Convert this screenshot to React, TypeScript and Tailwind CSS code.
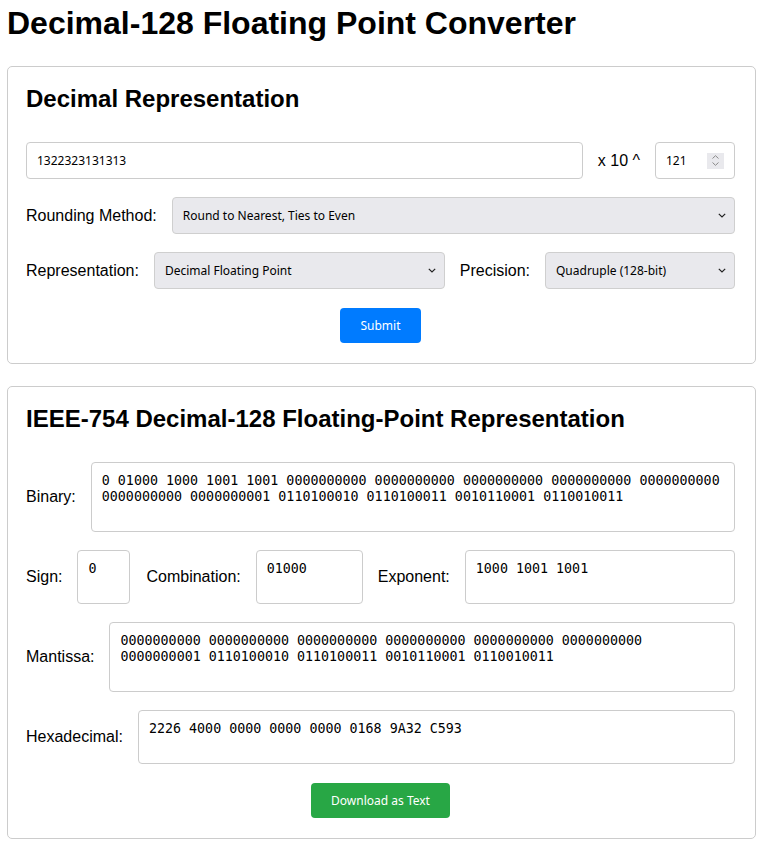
import React from "react";

const sans = { fontFamily: '"Liberation Sans", Arial, sans-serif' };

function Chevron() {
  return (
    <svg width="8" height="5" viewBox="0 0 8 5" className="shrink-0">
      <path d="M0.8 0.8 L4 4 L7.2 0.8" fill="none" stroke="#222" strokeWidth="1.2" />
    </svg>
  );
}

function Select({ value, className = "" }: { value: string; className?: string }) {
  return (
    <div
      className={`h-[37px] flex items-center justify-between pl-[10px] pr-[8px] bg-[#e9e9ed] border border-[#cfcfcf] rounded-[4px] text-[12px] text-black font-['Noto_Sans',sans-serif] ${className}`}
    >
      <span>{value}</span>
      <Chevron />
    </div>
  );
}

function Box({ text, h, className = "" }: { text: string; h: string; className?: string }) {
  return (
    <div
      className={`${h} border border-[#cccccc] rounded-[4px] bg-white p-[10px] text-[13.33px] leading-[16px] text-black whitespace-pre font-['DejaVu_Sans_Mono',monospace] overflow-hidden ${className}`}
    >
      {text}
    </div>
  );
}

function Label({ children }: { children: React.ReactNode }) {
  return <span className="text-[16px] text-black shrink-0 whitespace-nowrap">{children}</span>;
}

export default function App() {
  return (
    <div style={sans} className="bg-white min-h-[850px] pl-[7px] pr-[5px] pt-[5px] text-black">
      <h1 className="text-[32px] leading-[37px] font-bold mb-[24px]">Decimal-128 Floating Point Converter</h1>

      <div className="border border-[#cccccc] rounded-[5px] pl-[18px] pr-[20px] pt-[18px] pb-[20px]">
        <h2 className="text-[24px] leading-[28px] font-bold mb-[29px]">Decimal Representation</h2>

        <div className="flex items-center gap-[15px]">
          <div className="flex-1 h-[37px] border border-[#cccccc] rounded-[4px] bg-white px-[10px] flex items-center text-[12px] font-['Noto_Sans',sans-serif]">
            1322323131313
          </div>
          <Label>x 10 ^</Label>
          <div className="w-[80px] h-[37px] border border-[#cccccc] rounded-[4px] bg-white pl-[10px] pr-[10px] flex items-center justify-between text-[12px] font-['Noto_Sans',sans-serif]">
            <span>121</span>
            <div className="w-[17px] h-[16px] bg-[#e9e9ed] flex flex-col items-center justify-center gap-[3px]">
              <svg width="7" height="4" viewBox="0 0 7 4">
                <path d="M0.5 3.5 L3.5 0.7 L6.5 3.5" fill="none" stroke="#8a8a8a" strokeWidth="1" />
              </svg>
              <svg width="7" height="4" viewBox="0 0 7 4">
                <path d="M0.5 0.5 L3.5 3.3 L6.5 0.5" fill="none" stroke="#8a8a8a" strokeWidth="1" />
              </svg>
            </div>
          </div>
        </div>

        <div className="flex items-center gap-[15px] mt-[18px]">
          <Label>Rounding Method:</Label>
          <Select value="Round to Nearest, Ties to Even" className="flex-1" />
        </div>

        <div className="flex items-center gap-[15px] mt-[18px]">
          <Label>Representation:</Label>
          <Select value="Decimal Floating Point" className="flex-1" />
          <Label>Precision:</Label>
          <Select value="Quadruple (128-bit)" className="w-[190px]" />
        </div>

        <div className="flex justify-center mt-[19px]">
          <button className="h-[35px] px-[20px] rounded-[4px] bg-[#007bff] text-white text-[12px] font-['Noto_Sans',sans-serif]">
            Submit
          </button>
        </div>
      </div>

      <div className="border border-[#cccccc] rounded-[5px] pl-[18px] pr-[20px] pt-[18px] pb-[20px] mt-[22px]">
        <h2 className="text-[24px] leading-[28px] font-bold mb-[29px]">IEEE-754 Decimal-128 Floating-Point Representation</h2>

        <div className="flex items-center gap-[15px]">
          <Label>Binary:</Label>
          <Box
            h="h-[70px]"
            className="flex-1"
            text={"0 01000 1000 1001 1001 0000000000 0000000000 0000000000 0000000000 0000000000\n0000000000 0000000001 0110100010 0110100011 0010110001 0110010011"}
          />
        </div>

        <div className="flex items-center gap-[15px] mt-[18px]">
          <Label>Sign:</Label>
          <Box h="h-[54px]" className="w-[53px]" text="0" />
          <span className="ml-[1px]"><Label>Combination:</Label></span>
          <Box h="h-[54px]" className="w-[107px]" text="01000" />
          <Label>Exponent:</Label>
          <Box h="h-[54px]" className="flex-1" text="1000 1001 1001" />
        </div>

        <div className="flex items-center gap-[15px] mt-[18px]">
          <Label>Mantissa:</Label>
          <Box
            h="h-[70px]"
            className="flex-1"
            text={"0000000000 0000000000 0000000000 0000000000 0000000000 0000000000\n0000000001 0110100010 0110100011 0010110001 0110010011"}
          />
        </div>

        <div className="flex items-center gap-[15px] mt-[18px]">
          <Label>Hexadecimal:</Label>
          <Box h="h-[54px]" className="flex-1" text="2226 4000 0000 0000 0000 0168 9A32 C593" />
        </div>

        <div className="flex justify-center mt-[19px]">
          <button className="h-[35px] px-[20px] rounded-[4px] bg-[#28a745] text-white text-[12px] font-['Noto_Sans',sans-serif]">
            Download as Text
          </button>
        </div>
      </div>
    </div>
  );
}
